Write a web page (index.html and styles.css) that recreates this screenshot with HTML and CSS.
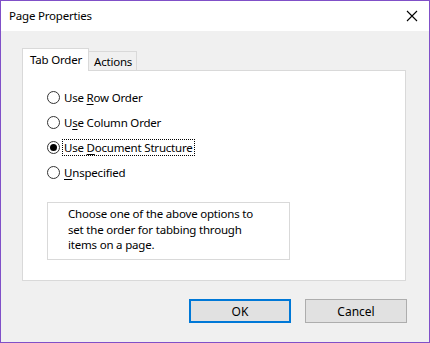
FILE: index.html
```html
<!DOCTYPE html>
<html lang="en">
<head>
    <meta charset="UTF-8">
    <meta name="viewport" content="width=device-width, initial-scale=1.0">
    <title>Page Properties</title>
    <link rel="stylesheet" href="styles.css">
</head>
<body>

    <div class="window">
        <div class="titlebar">
            <span class="title">Page Properties</span>
            <button class="close" aria-label="Close">
                <svg width="12" height="12" viewBox="0 0 12 12">
                    <path d="M1 1 L11 11 M11 1 L1 11" stroke="#000" stroke-width="1.1" fill="none"/>
                </svg>
            </button>
        </div>

        <div class="content">
            <div class="tabs">
                <div class="tab active">Tab Order</div>
                <div class="tab">Actions</div>
            </div>
            <div class="panel">
                <div class="options">
                    <label class="option">
                        <span class="radio"></span>
                        <span class="label">Use <u>R</u>ow Order</span>
                    </label>
                    <label class="option">
                        <span class="radio"></span>
                        <span class="label">U<u>s</u>e Column Order</span>
                    </label>
                    <label class="option">
                        <span class="radio checked"></span>
                        <span class="label focused">Use <u>D</u>ocument Structure</span>
                    </label>
                    <label class="option">
                        <span class="radio"></span>
                        <span class="label"><u>U</u>nspecified</span>
                    </label>
                </div>
                <div class="description">
                    Choose one of the above options to<br>
                    set the order for tabbing through<br>
                    items on a page.
                </div>
            </div>

            <div class="actions">
                <button class="button default">OK</button>
                <button class="button">Cancel</button>
            </div>
        </div>
    </div>

</body>
</html>
```

FILE: styles.css
```css
* {
    box-sizing: border-box;
}
body {
    margin: 0;
    font-family: "Noto Sans", "Open Sans", sans-serif;
    font-size: 11.5px;
    letter-spacing: -0.2px;
    color: #000;
    background-color: #fff;
}
.window {
    width: 430px;
    height: 343px;
    border: 1px solid #8050c8;
    background-color: #f0f0f0;
    display: flex;
    flex-direction: column;
}
.titlebar {
    height: 30px;
    background-color: #fff;
    display: flex;
    align-items: center;
    justify-content: space-between;
    padding-left: 8px;
}
.title {
    margin-top: -1px;
}
.close {
    width: 46px;
    height: 29px;
    border: none;
    background: none;
    display: flex;
    align-items: center;
    justify-content: center;
    padding: 0;
    margin-right: -6px;
}
.content {
    flex: 1;
    padding: 17px 21px 0 21px;
    display: flex;
    flex-direction: column;
}
.tabs {
    display: flex;
    align-items: flex-end;
    height: 22px;
    position: relative;
    z-index: 1;
}
.tab {
    height: 19px;
    padding: 0 4px 0 5px;
    border: 1px solid #d9d9d9;
    border-bottom: none;
    border-left: none;
    background-color: #f0f0f0;
    display: flex;
    align-items: center;
}
.tab.active {
    height: 23px;
    padding: 0 6px 2px 7px;
    border-left: 1px solid #d9d9d9;
    background-color: #fff;
    margin-bottom: -1px;
}
.panel {
    width: 384px;
    height: 211px;
    border: 1px solid #d9d9d9;
    background-color: #fff;
    padding: 14px 0 0 24px;
}
.options {
    display: flex;
    flex-direction: column;
}
.option {
    height: 25px;
    display: flex;
    align-items: center;
    gap: 2px;
}
.radio {
    width: 13px;
    height: 13px;
    border: 1px solid #333;
    border-radius: 50%;
    background-color: #fff;
    display: flex;
    align-items: center;
    justify-content: center;
}
.radio.checked::after {
    content: "";
    width: 7px;
    height: 7px;
    border-radius: 50%;
    background-color: #000;
}
.label {
    padding: 0 1px;
    border: 1px dotted transparent;
    line-height: 15px;
}
.label.focused {
    border-color: #000;
}
.label u {
    text-decoration-thickness: 1px;
    text-underline-offset: 2px;
}
.description {
    margin-top: 17px;
    width: 243px;
    height: 58px;
    border: 1px solid #d9d9d9;
    padding: 3px 0 0 20px;
    line-height: 15.5px;
}
.actions {
    display: flex;
    justify-content: flex-end;
    gap: 14px;
    margin-top: 18px;
    padding-right: 1px;
}
.button {
    width: 102px;
    height: 24px;
    font-family: inherit;
    font-size: 12px;
    background-color: #e1e1e1;
    border: 1px solid #adadad;
    padding: 0;
    color: #000;
}
.button.default {
    border: 2px solid #0078d7;
}
```
